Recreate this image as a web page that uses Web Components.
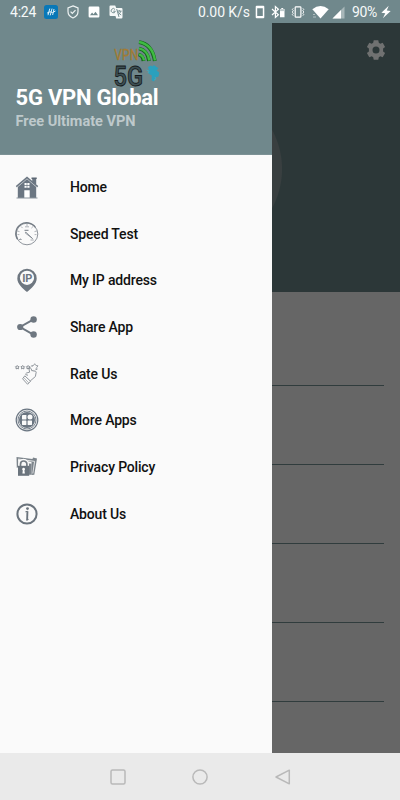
<!DOCTYPE html>
<html lang="en">
<head>
<meta charset="utf-8">
<title>5G VPN Global</title>
<style>
html,body{margin:0;width:400px;height:800px;overflow:hidden;font-family:Roboto,sans-serif}
</style>
</head>
<body>
<vpn-app></vpn-app>
<script>
const define = (name, html) => {
  customElements.define(name, class extends HTMLElement {
    constructor() {
      super();
      const t = document.createElement('template');
      t.innerHTML = html;
      this.attachShadow({ mode: 'open' }).append(t.content.cloneNode(true));
    }
  });
};

/* Each icon: [width, height, svg content] */
const icons = {
  app: [14, 14, '<rect width="14" height="14" rx="2.5" fill="#0878b8"/><path d="M5.8 3.6 4 10.2M8 3.6 6.2 10.4M10 4 8.6 10M3 8.2 6 6.7 8.4 7.6 11.5 6" stroke="#e4f3fb" stroke-width=".95" fill="none"/>'],
  shield: [12, 14, '<path d="M6 .9 11 2.9V6.6C11 9.7 8.9 12 6 13 3.1 12 1 9.7 1 6.6V2.9Z" fill="none" stroke="#eef3f3" stroke-width="1.2"/><path d="m3.6 6.7 1.7 1.7 3.2-3.3" fill="none" stroke="#eef3f3" stroke-width="1.2"/>'],
  image: [12, 12, '<path fill-rule="evenodd" d="M1.8.5H10.2Q11.4.5 11.4 1.7V10.3Q11.4 11.5 10.2 11.5H1.8Q.6 11.5.6 10.3V1.7Q.6.5 1.8.5ZM2 9.3H10L7.5 5.8 5.5 8.2 4.1 6.6Z" fill="#fff"/>'],
  translate: [14, 14, '<path d="M1.5.5H6.2L7.2 3H12.3Q13.5 3 13.5 4.2V12.3Q13.5 13.5 12.3 13.5H7.2L6.5 11H1.5Q.5 11 .5 10V1.5Q.5.5 1.5.5Z" fill="#f5f8f8"/><path d="M6 4.5A2.1 2.1 0 1 0 6.3 6.2H4.3M7.7 4 10 12M8.1 6.1H12.6M10.3 5.1V6.2M11.8 6.2Q11.2 8.6 9.1 10M9 7.1Q10.5 9.2 12.2 10" stroke="#6f888b" stroke-width=".9" fill="none"/>'],
  battery: [10, 14, '<path d="M1.7.8H8.3Q9.3.8 9.3 1.8V12.3Q9.3 13.3 8.3 13.3H1.7Q.7 13.3.7 12.3V1.8Q.7.8 1.7.8ZM2.2 3.2V10.9H7.8V3.2Z" fill="#fff" fill-rule="evenodd"/>'],
  bluetooth: [14, 14, '<path d="m1 4 6.4 5.7L4.4 12.4V1.6L7.4 4.3 1 10" fill="none" stroke="#fff" stroke-width="1.2"/><path d="M9 4h1.3V3h1.9V4h1.3v8.3H9Z" fill="#fff"/><path d="M9.1 4.1h4.3v2H9.1Z" fill="#bdc9cb"/>'],
  vibrate: [14, 14, '<rect x="4.2" y="1.8" width="5.7" height="10.4" rx=".8" fill="none" stroke="#fff" stroke-width="1.2"/><path d="m2.3 3.3-1 1 1 1.3-1 1.4 1 1.3-1 1.4 1 1M11.8 3.3l1 1-1 1.3 1 1.4-1 1.3 1 1.4-1 1" fill="none" stroke="#fff" stroke-width=".9"/>'],
  wifi: [17, 13, '<path d="M.3 3.3Q8.5-3.1 16.7 3.3L8.5 12.6Z" fill="#fff"/><path d="M1 8.5h2M1 11h3" stroke="#c2cdcf" stroke-width=".8"/>'],
  signal: [13, 13, '<path d="M.5 12.5 12.5.5v12Z" fill="#a8b7b9"/><path d="M.5 12.5 9 4v8.5Z" fill="#fff"/>'],
  bolt: [10, 14, '<path d="M7.7.8.4 7.7l3.9.5-2.4 5.1L9.7 6.1 5.8 5.5Z" fill="#fff"/>'],
  logo: [48, 48, '<text x="1.3" y="20" font-family="Roboto" font-size="14" textLength="24" lengthAdjust="spacingAndGlyphs" fill="#a98035" stroke="#9a742d" stroke-width=".35">VPN</text><g fill="none" stroke-linecap="butt"><path d="M26 2.1Q39 4 41.8 21M26 8.5Q34.3 10 36 21M25.5 14.5Q30 15.5 30.5 21" stroke="#14631c" stroke-width="3.8"/><path d="M26 2Q39.5 4.3 42 20.5M26 8.4Q34.8 10 36.4 20.5M26 14.4Q30.5 15.5 31 20.5" stroke="#3fbb42" stroke-width="2.4"/></g><text x=".6" y="46" font-family="Roboto" font-weight="500" font-size="28" textLength="29.5" lengthAdjust="spacingAndGlyphs" fill="#3d5054" stroke="#14191b" stroke-width=".9">5G</text><path d="m35 27 3-1.5 1.7 1 1-1.5 4.8 3.3-2 2.2 2.7 2-.7 4-3 1-1.5 4-2.4-1.2.2-4.7-3.4-2.1 1-2Z" fill="#2ba0bd"/><path d="m33.5 30 2.5 1-1 2M42 37l1 2-2 1" fill="none" stroke="#44a7bb"/>'],
  home: [24, 24, '<path d="M17.2 3h4v6h-4z" fill="#6b7682"/><path d="M16.5 2.5h5.2v1.5h-5.2z" fill="#5b6672"/><path d="M2.8 11.5 12 3.6l9.2 7.9V23H2.8Z" fill="#6b7682"/><path d="M1.7 12.6 12 3.8l10.3 8.8" fill="none" stroke="#d5d9dc" stroke-width=".8"/><path d="M.8 11 12 1.5 23.2 11l-.9 1.2L12 3.5 1.7 12.2Z" fill="#6b7682"/><path d="M9.3 15.3h5.4V23H9.3ZM9.5 8h2.2v2.1H9.5Zm2.8 0h2.2v2.1h-2.2Zm-2.8 2.7h2.2v2H9.5Zm2.8 0h2.2v2h-2.2Z" fill="#fff"/><path d="M1.5 23h21" stroke="#8b949d"/>'],
  speed: [24, 24, '<g fill="none" stroke="#737b84"><circle cx="12" cy="12" r="10.8" stroke-width=".8"/><path d="M2.6 17.4A10.7 10.7 0 0 1 20.5 5.5" stroke-width="1.3"/><path d="M12 1.5V4M2.2 9l2.3.6M21.8 9l-2.3.6M4 18l2-1.5M18 4.5 16.4 6.1M6 4.5l1.6 1.6M2.5 12.6h1.9M19.6 12.6h1.9" stroke-width=".55"/><path d="m10.8 10 6.8 6.6-7.4-5.7Z" stroke-width=".75"/><path d="M9.5 8.3h4" stroke-width="1"/><path d="M4.3 17.5h2.5M15.5 18h3.3M10 4.8h4" stroke-width=".6"/></g>'],
  ip: [24, 24, '<path d="M12 .7a9.7 9.7 0 0 1 9.7 9.7C21.7 16 16.1 20.3 12 24 7.9 20.3 2.3 16 2.3 10.4A9.7 9.7 0 0 1 12 .7Z" fill="#6e7780"/><circle cx="12" cy="9.8" r="7.1" fill="#fafafa"/><text x="12.2" y="13.7" text-anchor="middle" font-family="Roboto" font-weight="700" font-size="11" fill="#6e7780">IP</text>'],
  share: [24, 24, '<path d="M18.6 4.3 5.1 12l13.7 7.8" fill="none" stroke="#6e7780" stroke-width="2"/><g fill="#6e7780"><circle cx="5.2" cy="12" r="3.1"/><circle cx="18.6" cy="4.5" r="3.2"/><circle cx="18.6" cy="19.5" r="3.2"/></g>'],
  rate: [24, 24, '<g fill="none" stroke="#858b92" stroke-width="1"><path d="m2.2 3.5.7 1 1.2.3-.8.9.1 1.2-1.2-.5-1.1.5.1-1.2-.8-.9 1.2-.3ZM7.7 3.5l.7 1 1.2.3-.8.9.1 1.2-1.2-.5-1.1.5.1-1.2-.8-.9 1.2-.3ZM13.1 3.5l.7 1 1.2.3-.8.9.1 1.2-1.2-.5-1.1.5.1-1.2-.8-.9 1.2-.3Z"/><path d="m17.4 5-.9-1.3 2-.2 1.2-1.8 1.2 1.8 2.1.3-1.3 1.8.3 2-1.8-.6" stroke-width=".8"/><path d="m15.2 19 5.2-4.5.8-4.4-1-1.3-1.5.5-.4-.9-1.4.5L16 6.4q-1-1.6-2.2-.5l.8 4.3-3.1.8q-1.7.9-.3 1.9l1.8.3M9.8 13.8l5.7 5.4-2.9 3.1-5-5.5Z" stroke-width=".9"/><path d="m8.7 15.5 5 5.3" stroke-width=".6"/></g>'],
  apps: [24, 24, '<g fill="none" stroke="#6b7682"><circle cx="12" cy="12" r="10.8" stroke-width="1.2"/><circle cx="12" cy="12" r="9" stroke-width=".9"/></g><circle cx="12" cy="12" r="8" fill="#6b7682"/><g fill="#fafafa"><rect x="7" y="7" width="4.4" height="4.4" rx=".4"/><rect x="7" y="12.6" width="4.4" height="4.4" rx=".4"/><rect x="12.6" y="12.6" width="4.4" height="4.4" rx=".4"/><circle cx="15" cy="9" r="2.5"/></g>'],
  privacy: [24, 24, '<path d="m1.5 2 16 2 .5-1.4 4 .8-2.7 16.3-2.8.3V7L3 4.3 3.4 12 1.8 13Z" fill="#7c848b"/><path d="M3.2 4 19.6 6.4 17.8 18.5" fill="none" stroke="#fafafa" stroke-width=".8"/><path d="M12.5 8.3 16.5 8.8V19.8h-4Z" fill="#7c848b"/><path d="M4.2 11V9.2a4.4 4.4 0 0 1 8.8 0V11" fill="#fafafa" stroke="#fafafa" stroke-width="2"/><path d="M5.5 11.5V9.2a3.2 3.2 0 0 1 6.4 0v2.3" fill="none" stroke="#747c84" stroke-width="1.7"/><path d="M3 10.8h11.2V20.8H3Z" fill="#6b747d"/><path d="M8.6 12.7a1.5 1.5 0 0 1 .8 2.7l.5 3H7.4l.4-3a1.5 1.5 0 0 1 .8-2.7Z" fill="#fff"/>'],
  about: [24, 24, '<circle cx="12" cy="12" r="9.6" fill="none" stroke="#6b747d" stroke-width="2"/><circle cx="12.5" cy="6.6" r="1.4" fill="#6b747d"/><path d="M10.4 9.8 12.7 9.3M11.4 18.2l2.2-.8" stroke="#6b747d"/><path d="M11.5 9.2h1.9l-.4 9h-1.8Z" fill="#6b747d"/>'],
  gear: [20, 20, '<path fill-rule="evenodd" d="M7.7.3h4.6l.5 2.5 1.5.9 2.4-.9 2.4 4.1-2 1.7v2.8l2 1.7-2.4 4.1-2.4-.9-1.5.9-.5 2.5H7.7l-.5-2.5-1.5-.9-2.4.9L.9 13.1l2-1.7V8.6l-2-1.7 2.4-4.1 2.4.9 1.5-.9ZM10 6.5a3.5 3.5 0 1 0 0 7 3.5 3.5 0 0 0 0-7Z" fill="#707171"/>'],
  recent: [18, 18, '<rect x="2" y="2" width="14" height="14" rx="1.5" fill="none" stroke="#b9b9b9" stroke-width="1.5"/>'],
  circle: [18, 18, '<circle cx="9" cy="9" r="7.1" fill="none" stroke="#b9b9b9" stroke-width="1.5"/>'],
  back: [18, 18, '<path d="M15.3 2.2v13.6L2 9Z" fill="none" stroke="#b9b9b9" stroke-width="1.5" stroke-linejoin="round"/>']
};

customElements.define('app-icon', class extends HTMLElement {
  connectedCallback() {
    if (this.shadowRoot) return;
    const [w, h, body] = icons[this.getAttribute('name')];
    this.attachShadow({ mode: 'open' }).innerHTML =
      `<style>:host{display:block;flex:none;width:${w}px;height:${h}px}svg{display:block;overflow:visible}</style>
       <svg width="${w}" height="${h}" viewBox="0 0 ${w} ${h}">${body}</svg>`;
  }
});

define('status-bar', `
<style>
:host{display:flex;align-items:center;justify-content:space-between;box-sizing:border-box;height:23px;padding:1px 9px 0 10px;background:#70888c;color:#f6f9f9;font-size:14px;letter-spacing:-.2px;line-height:22px;white-space:nowrap}
div{display:flex;align-items:center}
.time{width:34px}.rate{width:56.5px;letter-spacing:-.1px}.percent{width:28px;letter-spacing:-.4px}
.left app-icon+app-icon{margin-left:9px}
</style>
<div class="left"><span class="time">4:24</span><app-icon name="app"></app-icon><app-icon name="shield"></app-icon><app-icon name="image"></app-icon><app-icon name="translate"></app-icon></div>
<div><span class="rate">0.00 K/s</span><app-icon name="battery"></app-icon><app-icon name="bluetooth" style="margin-left:6px"></app-icon><app-icon name="vibrate" style="margin-left:6.5px"></app-icon><app-icon name="wifi" style="margin-left:7px"></app-icon><app-icon name="signal" style="margin:0 7px 0 3px"></app-icon><span class="percent">90%</span><app-icon name="bolt" style="margin-left:1px"></app-icon></div>`);

define('drawer-header', `
<style>
:host{display:flex;flex-direction:column;box-sizing:border-box;height:132px;padding:17px 15.5px 0;background:#70888c;border-bottom:.5px solid #7c9195}
app-icon{margin-left:97px}
.title{height:26px;margin-top:-4px;font-size:22px;letter-spacing:-.22px;line-height:27px;font-weight:700;color:#fff;z-index:1}
.sub{margin-top:2px;font-size:14.5px;line-height:20px;font-weight:700;color:#bec9cb}
</style>
<app-icon name="logo"></app-icon>
<div class="title"><slot name="title"></slot></div>
<div class="sub"><slot name="subtitle"></slot></div>`);

customElements.define('menu-item', class extends HTMLElement {
  connectedCallback() {
    if (this.shadowRoot) return;
    this.attachShadow({ mode: 'open' }).innerHTML = `
<style>:host{display:flex;align-items:center;gap:31px;height:46.65px;padding-left:15px;color:#111;font-size:14px;letter-spacing:-.17px;font-weight:500}</style>
<app-icon name="${this.getAttribute('icon')}"></app-icon><span><slot></slot></span>`;
  }
});

define('nav-drawer', `
<style>:host{display:flex;flex-direction:column;width:272px;background:#fafafa}nav{padding-top:8.8px}</style>
<slot name="header"></slot><nav><slot></slot></nav>`);

define('dimmed-page', `
<style>
:host{display:block;flex:1;background:#666;overflow:hidden}
header{display:flex;justify-content:flex-end;box-sizing:border-box;height:269px;padding:17px 14px;background:radial-gradient(circle at -72px 146px,#393f40 81.5px,#2c3738 82.5px)}
ul{list-style:none;margin:0;padding:15px 16px 0 0}
li{box-sizing:border-box;height:79px;border-bottom:1px solid #303c3d}
</style>
<header><app-icon name="gear"></app-icon></header>
<ul><li></li><li></li><li></li><li></li><li></li></ul>`);

define('system-nav', `
<style>:host{display:flex;align-items:center;justify-content:center;gap:64.5px;box-sizing:border-box;height:47px;background:#eaeaea}</style>
<app-icon name="recent"></app-icon><app-icon name="circle"></app-icon><app-icon name="back"></app-icon>`);

define('vpn-app', `
<style>
:host{display:flex;flex-direction:column;width:400px;height:800px;font-family:Roboto,sans-serif}
main{display:flex;flex:1;min-height:0}
</style>
<status-bar></status-bar>
<main>
<nav-drawer>
<drawer-header slot="header"><span slot="title">5G VPN Global</span><span slot="subtitle">Free Ultimate VPN</span></drawer-header>
<menu-item icon="home">Home</menu-item>
<menu-item icon="speed">Speed Test</menu-item>
<menu-item icon="ip">My IP address</menu-item>
<menu-item icon="share">Share App</menu-item>
<menu-item icon="rate">Rate Us</menu-item>
<menu-item icon="apps">More Apps</menu-item>
<menu-item icon="privacy">Privacy Policy</menu-item>
<menu-item icon="about">About Us</menu-item>
</nav-drawer>
<dimmed-page></dimmed-page>
</main>
<system-nav></system-nav>`);
</script>
</body>
</html>
